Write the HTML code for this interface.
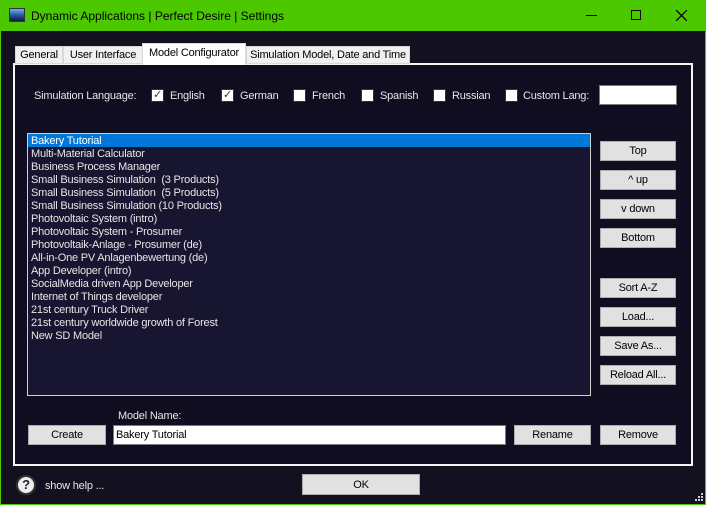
<!DOCTYPE html>
<html><head><style>
*{margin:0;padding:0;box-sizing:border-box}
body{width:706px;height:505px;background:#13111f;font-family:"Liberation Sans",sans-serif;font-size:11px;letter-spacing:-0.2px;position:relative;overflow:hidden;color:#e6e6e6;white-space:nowrap}
.a{position:absolute}
#title{left:0;top:0;width:706px;height:31px;background:#4cc800;color:#000;font-size:12px;letter-spacing:0}
#lb{left:0;top:31px;width:1px;height:474px;background:#4cc800}
#rb{right:0;top:31px;width:1px;height:474px;background:#4cc800}
#bb{left:0;bottom:0;width:706px;height:1px;background:#4cc800}
.tab{top:46px;height:18px;background:#f0f0f0;border:1px solid #d9d9d9;color:#000;text-align:center;line-height:17px}
#panel{left:13px;top:63px;width:680px;height:403px;border:2px solid #f4f4f4;background:#100d20}
.btn{position:absolute;background:#e1e1e1;border:1px solid #adadad;color:#000;text-align:center;line-height:19px}
.cb{position:absolute;top:89px;width:13px;height:13px;background:#fff;border:1px solid #333;color:#333;font-size:11px;line-height:11px;text-align:center}
.lt{position:absolute;top:90px;color:#e6e6e6}
#list{left:27px;top:133px;width:564px;height:263px;border:1px solid #cfcfcf;background:#181530}
#list div{height:13px;line-height:14px;padding-left:3px;white-space:pre;color:#e6e6e6}
#list .sel{background:#0078d7;color:#fff}
</style></head><body>
<div id="title" class="a">
 <div class="a" style="left:9px;top:8px;width:16px;height:14px;background:linear-gradient(#7ab0e0,#2a5a9a 50%,#0a1a40);border:1px solid #334"></div>
 <div class="a" style="left:31px;top:9px">Dynamic Applications | Perfect Desire | Settings</div>
 <div class="a" style="left:586px;top:15px;width:11px;height:1px;background:#000"></div>
 <div class="a" style="left:631px;top:10px;width:10px;height:10px;border:1px solid #000"></div>
 <svg class="a" style="left:676px;top:10px" width="11" height="11"><path d="M0 0L11 11M11 0L0 11" stroke="#000" stroke-width="1.2"/></svg>
</div>
<div id="lb" class="a"></div><div id="rb" class="a"></div><div id="bb" class="a"></div>
<div id="panel" class="a"></div>
<div class="a tab" style="left:15px;width:48px">General</div>
<div class="a tab" style="left:63px;width:80px">User Interface</div>
<div class="a tab" style="left:246px;width:164px">Simulation Model, Date and Time</div>
<div class="a tab" style="left:142px;top:43px;width:104px;height:22px;background:#fff;border-bottom:none;line-height:18px">Model Configurator</div>

<div class="lt" style="left:34px">Simulation Language:</div>
<div class="cb" style="left:151px">✓</div><div class="lt" style="left:170px">English</div>
<div class="cb" style="left:221px">✓</div><div class="lt" style="left:240px">German</div>
<div class="cb" style="left:293px"></div><div class="lt" style="left:312px">French</div>
<div class="cb" style="left:361px"></div><div class="lt" style="left:380px">Spanish</div>
<div class="cb" style="left:433px"></div><div class="lt" style="left:452px">Russian</div>
<div class="cb" style="left:505px"></div><div class="lt" style="left:523px">Custom Lang:</div>
<div class="a" style="left:599px;top:85px;width:78px;height:20px;background:#fff;border:1px solid #7a7a7a"></div>

<div id="list" class="a">
<div class="sel">Bakery Tutorial</div>
<div>Multi-Material Calculator</div>
<div>Business Process Manager</div>
<div>Small Business Simulation  (3 Products)</div>
<div>Small Business Simulation  (5 Products)</div>
<div>Small Business Simulation (10 Products)</div>
<div>Photovoltaic System (intro)</div>
<div>Photovoltaic System - Prosumer</div>
<div>Photovoltaik-Anlage - Prosumer (de)</div>
<div>All-in-One PV Anlagenbewertung (de)</div>
<div>App Developer (intro)</div>
<div>SocialMedia driven App Developer</div>
<div>Internet of Things developer</div>
<div>21st century Truck Driver</div>
<div>21st century worldwide growth of Forest</div>
<div>New SD Model</div>
</div>

<div class="btn" style="left:600px;top:141px;width:76px;height:20px">Top</div>
<div class="btn" style="left:600px;top:170px;width:76px;height:20px">^ up</div>
<div class="btn" style="left:600px;top:199px;width:76px;height:20px">v down</div>
<div class="btn" style="left:600px;top:228px;width:76px;height:20px">Bottom</div>
<div class="btn" style="left:600px;top:278px;width:76px;height:20px">Sort A-Z</div>
<div class="btn" style="left:600px;top:307px;width:76px;height:20px">Load...</div>
<div class="btn" style="left:600px;top:336px;width:76px;height:20px">Save As...</div>
<div class="btn" style="left:600px;top:365px;width:76px;height:20px">Reload All...</div>

<div class="a" style="left:118px;top:410px">Model Name:</div>
<div class="btn" style="left:28px;top:425px;width:78px;height:20px">Create</div>
<div class="a" style="left:113px;top:425px;width:393px;height:20px;background:#fff;border:1px solid #7a7a7a;color:#000;padding-left:2px;line-height:19px">Bakery Tutorial</div>
<div class="btn" style="left:514px;top:425px;width:77px;height:20px">Rename</div>
<div class="btn" style="left:600px;top:425px;width:76px;height:20px">Remove</div>

<div class="a" style="left:16px;top:475px;width:20px;height:20px;border-radius:50%;background:#eee;border:2px solid #333;color:#222;font-weight:bold;text-align:center;line-height:16px;font-size:13px">?</div>
<div class="a" style="left:45px;top:480px">show help ...</div>
<div class="btn" style="left:302px;top:474px;width:118px;height:21px;line-height:20px">OK</div>
<svg class="a" style="left:694px;top:492px" width="10" height="10"><g fill="#ccc"><rect x="7" y="1" width="2" height="2"/><rect x="4" y="4" width="2" height="2"/><rect x="7" y="4" width="2" height="2"/><rect x="1" y="7" width="2" height="2"/><rect x="4" y="7" width="2" height="2"/><rect x="7" y="7" width="2" height="2"/></g></svg>
</body></html>
